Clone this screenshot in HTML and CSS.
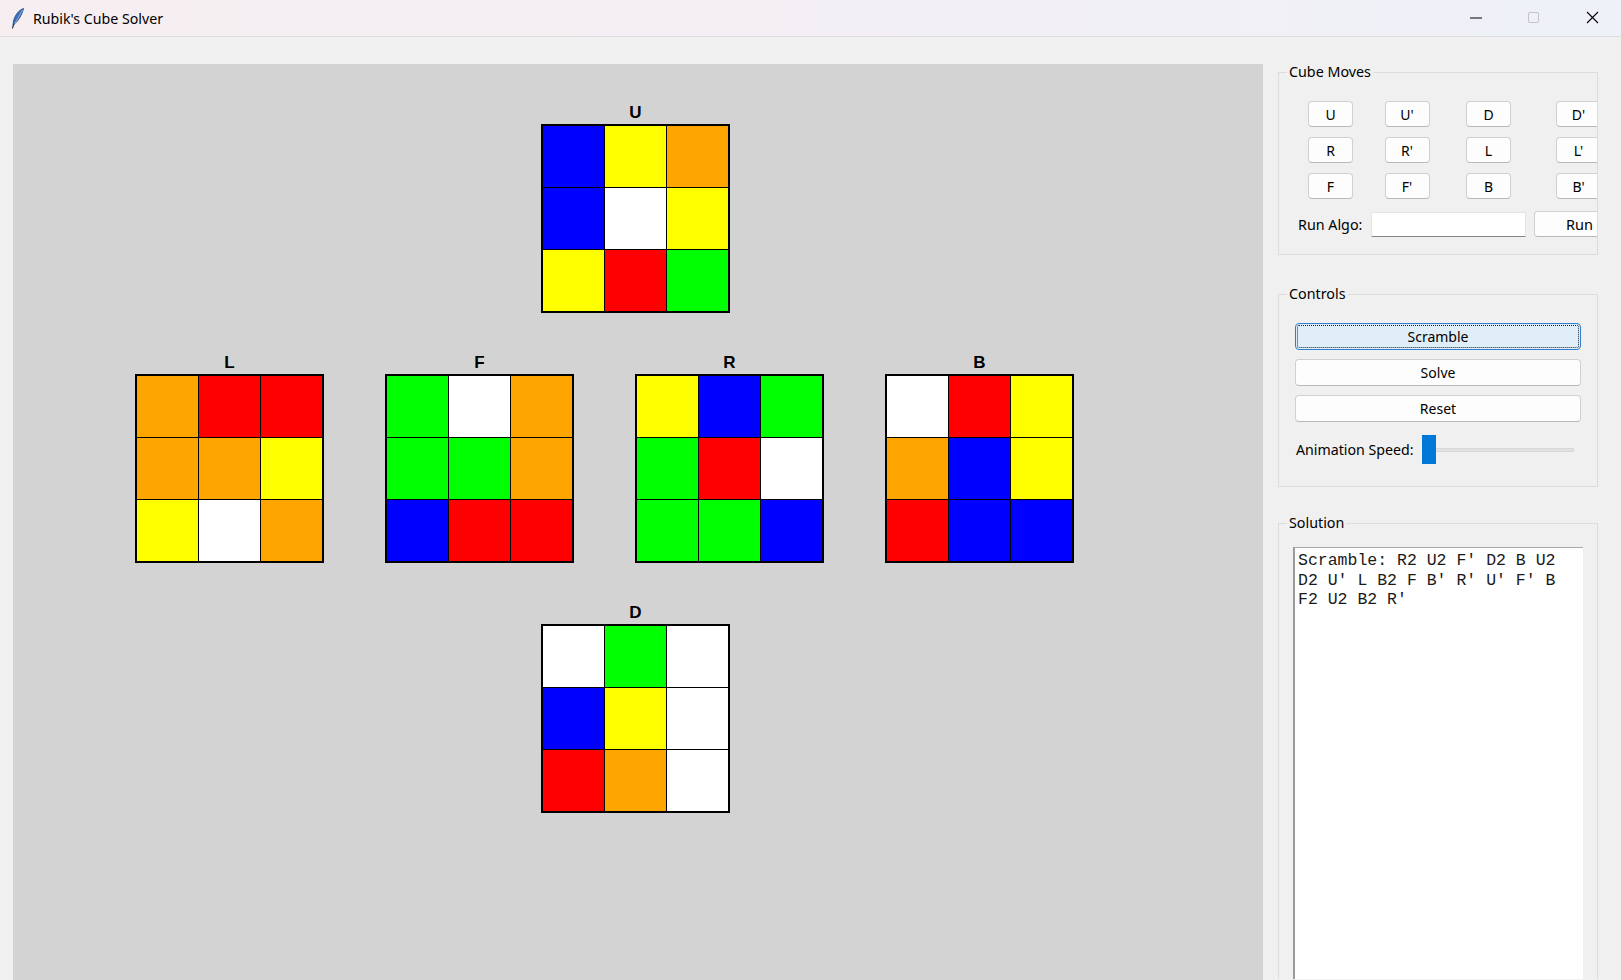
FILE: index.html
```html
<!DOCTYPE html>
<html>
<head>
<meta charset="utf-8">
<title>Rubik's Cube Solver</title>
<link rel="stylesheet" href="styles.css">
</head>
<body>
<div class="titlebar">
  <svg class="app-icon" width="16" height="22" viewBox="0 0 16 22">
    <path d="M13.5 1.5 C9 3 5 8 3.5 14 L3 18 L4.5 17 C8 14 12 8 13.5 1.5 Z" fill="#3d6fb8" stroke="#1d3f78" stroke-width="0.8"/>
    <path d="M12.5 3 L3.5 19" stroke="#9fc0ea" stroke-width="0.8"/>
    <path d="M3.8 17 L2.5 21" stroke="#333" stroke-width="1.2" stroke-linecap="round"/>
  </svg>
  <span class="title">Rubik's Cube Solver</span>
  <div class="winctl">
    <svg class="wbtn" width="58" height="36" viewBox="0 0 58 36"><path d="M23 18 H35" stroke="#000" stroke-width="1"/></svg>
    <svg class="wbtn" width="58" height="36" viewBox="0 0 58 36"><rect x="23.5" y="12.5" width="10" height="10" rx="1.5" fill="none" stroke="#c4c4c4" stroke-width="1"/></svg>
    <svg class="wbtn" width="58" height="36" viewBox="0 0 58 36"><path d="M24 12 L35 23 M35 12 L24 23" stroke="#000" stroke-width="1.1"/></svg>
  </div>
</div>
<div class="main">
  <div class="canvas">
    <div class="face-row shifted">
      <div class="face"><div class="face-label">U</div><div class="grid">
        <i class="b"></i><i class="y"></i><i class="o"></i>
        <i class="b"></i><i class="w"></i><i class="y"></i>
        <i class="y"></i><i class="r"></i><i class="g"></i>
      </div></div>
    </div>
    <div class="face-row">
      <div class="face"><div class="face-label">L</div><div class="grid">
        <i class="o"></i><i class="r"></i><i class="r"></i>
        <i class="o"></i><i class="o"></i><i class="y"></i>
        <i class="y"></i><i class="w"></i><i class="o"></i>
      </div></div>
      <div class="face"><div class="face-label">F</div><div class="grid">
        <i class="g"></i><i class="w"></i><i class="o"></i>
        <i class="g"></i><i class="g"></i><i class="o"></i>
        <i class="b"></i><i class="r"></i><i class="r"></i>
      </div></div>
      <div class="face"><div class="face-label">R</div><div class="grid">
        <i class="y"></i><i class="b"></i><i class="g"></i>
        <i class="g"></i><i class="r"></i><i class="w"></i>
        <i class="g"></i><i class="g"></i><i class="b"></i>
      </div></div>
      <div class="face"><div class="face-label">B</div><div class="grid">
        <i class="w"></i><i class="r"></i><i class="y"></i>
        <i class="o"></i><i class="b"></i><i class="y"></i>
        <i class="r"></i><i class="b"></i><i class="b"></i>
      </div></div>
    </div>
    <div class="face-row shifted">
      <div class="face"><div class="face-label">D</div><div class="grid">
        <i class="w"></i><i class="g"></i><i class="w"></i>
        <i class="b"></i><i class="y"></i><i class="w"></i>
        <i class="r"></i><i class="o"></i><i class="w"></i>
      </div></div>
    </div>
  </div>

  <div class="panel">
    <fieldset class="group moves">
      <legend>Cube Moves</legend>
      <div class="moves-clip">
        <div class="moves-grid">
          <button class="btn mv">U</button><button class="btn mv">U'</button><button class="btn mv">D</button><button class="btn mv">D'</button>
          <button class="btn mv">R</button><button class="btn mv">R'</button><button class="btn mv">L</button><button class="btn mv">L'</button>
          <button class="btn mv">F</button><button class="btn mv">F'</button><button class="btn mv">B</button><button class="btn mv">B'</button>
          <span class="algo-label">Run Algo:</span>
          <input class="algo-entry" type="text">
          <button class="btn run">Run</button>
        </div>
      </div>
    </fieldset>

    <fieldset class="group controls">
      <legend>Controls</legend>
      <div class="controls-body">
        <button class="btn wide focused">Scramble</button>
        <button class="btn wide">Solve</button>
        <button class="btn wide">Reset</button>
        <div class="speed-row">
          <span class="speed-label">Animation Speed:</span>
          <div class="slider"><div class="thumb"></div><div class="track"></div></div>
        </div>
      </div>
    </fieldset>

    <fieldset class="group solution">
      <legend>Solution</legend>
      <div class="solution-body">
        <div class="solution-text">Scramble: R2 U2 F' D2 B U2
D2 U' L B2 F B' R' U' F' B
F2 U2 B2 R'</div>
      </div>
    </fieldset>
  </div>
</div>
</body>
</html>
```

FILE: styles.css
```css
* { box-sizing: border-box; }
html, body { margin: 0; padding: 0; }
body {
  width: 1621px;
  height: 980px;
  overflow: hidden;
  background: #f0f0f0;
  font-family: "Noto Sans", "Open Sans", sans-serif;
  font-size: 14px;
  color: #000;
}

.titlebar {
  height: 37px;
  display: flex;
  align-items: center;
  background: linear-gradient(90deg, #f6eef1 0%, #f3eff4 50%, #eef1f8 100%);
  border-bottom: 1px solid #dcdcdc;
}
.app-icon { margin-left: 10px; margin-right: 7px; }
.title { font-size: 14.2px; }
.winctl { margin-left: auto; display: flex; }
.wbtn { display: block; }

.main {
  display: flex;
  align-items: flex-start;
  padding-left: 13px;
  height: 943px;
}

.canvas {
  margin-top: 27px;
  width: 1250px;
  height: 916px;
  background: #d3d3d3;
  padding: 40px 0 0 122px;
  display: flex;
  flex-direction: column;
  gap: 41px;
}
.face-row { display: flex; gap: 61px; }
.face-row.shifted { padding-left: 406px; }
.face { width: 189px; }
.face-label {
  height: 20px;
  line-height: 18px;
  text-align: center;
  font-family: "Liberation Sans", Arial, sans-serif;
  font-weight: bold;
  font-size: 17px;
}
.grid {
  display: grid;
  grid-template-columns: 61px 61px 61px;
  grid-auto-rows: 61px;
  gap: 1px;
  background: #000;
  border: 2px solid #000;
  width: 189px;
  height: 189px;
}
.grid i { display: block; }
.b { background: #0000ff; }
.y { background: #ffff00; }
.o { background: #ffa500; }
.w { background: #ffffff; }
.r { background: #ff0000; }
.g { background: #00ff00; }

.panel {
  margin-left: 15px;
  padding-top: 25px;
  width: 320px;
  display: flex;
  flex-direction: column;
}
.group {
  margin: 0;
  border: 1px solid #dcdcdc;
  padding: 0;
  min-width: 0;
}
.moves { margin-bottom: 29px; }
.controls { margin-bottom: 26px; }
.group legend {
  margin-left: 8px;
  padding: 0 2px;
  font-size: 14.3px;
  line-height: 20px;
  height: 20px;
}

.btn {
  font-family: "Noto Sans", "Open Sans", sans-serif;
  font-size: 14px;
  color: #000;
  background: #fdfdfd;
  border: 1px solid #d0d0d0;
  border-bottom-color: #b9b9b9;
  border-radius: 4px;
  padding: 0;
  margin: 0;
}

.moves-clip {
  overflow: hidden;
  padding: 19px 0 19px 11px;
}
.moves-grid {
  display: grid;
  grid-template-columns: 81px 72px 91px 89px;
  grid-auto-rows: 26px;
  row-gap: 10px;
  justify-items: center;
  align-items: center;
  width: 333px;
}
.mv { width: 45px; height: 26px; }
.algo-label {
  margin-top: 4px;
  justify-self: start;
  margin-left: 8px;
  font-size: 14.3px;
  white-space: nowrap;
}
.algo-entry {
  margin-top: 4px;
  grid-column: 2 / span 2;
  justify-self: start;
  width: 155px;
  height: 25px;
  border: 1px solid #e4e4e4;
  border-bottom: 1px solid #858585;
  background: #fff;
  padding: 0;
  border-radius: 1px;
}
.run {
  margin-top: 4px;
  justify-self: start;
  width: 89px;
  height: 26px;
  font-size: 14.5px;
  text-align: left;
  padding-left: 31px;
}

.controls-body { padding: 19px 16px 22px 16px; }
.wide { display: block; width: 286px; height: 27px; margin-bottom: 9px; font-size: 14px; }
.wide.focused {
  background: #e0eef9;
  border: 1px solid #2f7fd0;
  outline: 1px dotted #222;
  outline-offset: -3px;
}
.speed-row {
  display: flex;
  align-items: center;
  margin-top: 13px;
  height: 29px;
}
.speed-label { font-size: 14.2px; width: 127px; padding-left: 1px; white-space: nowrap; }
.slider { display: flex; align-items: center; }
.thumb { width: 14px; height: 29px; background: #0078d7; }
.track { width: 138px; height: 4px; background: #e2e2e2; border: 1px solid #d8d8d8; border-left: none; }

.solution { height: 466px; border-bottom: none; }
.solution-body { padding: 14px 14px 0 14px; }
.solution-text {
  background: #fff;
  border-top: 1px solid #a8a8a8;
  border-left: 2px solid #9a9a9a;
  height: 432px;
  width: 290px;
  padding: 3px 0 0 3px;
  white-space: pre;
  font-family: "Liberation Mono", "Courier New", monospace;
  font-size: 16.5px;
  line-height: 19.5px;
  color: #1a1a1a;
}
```
